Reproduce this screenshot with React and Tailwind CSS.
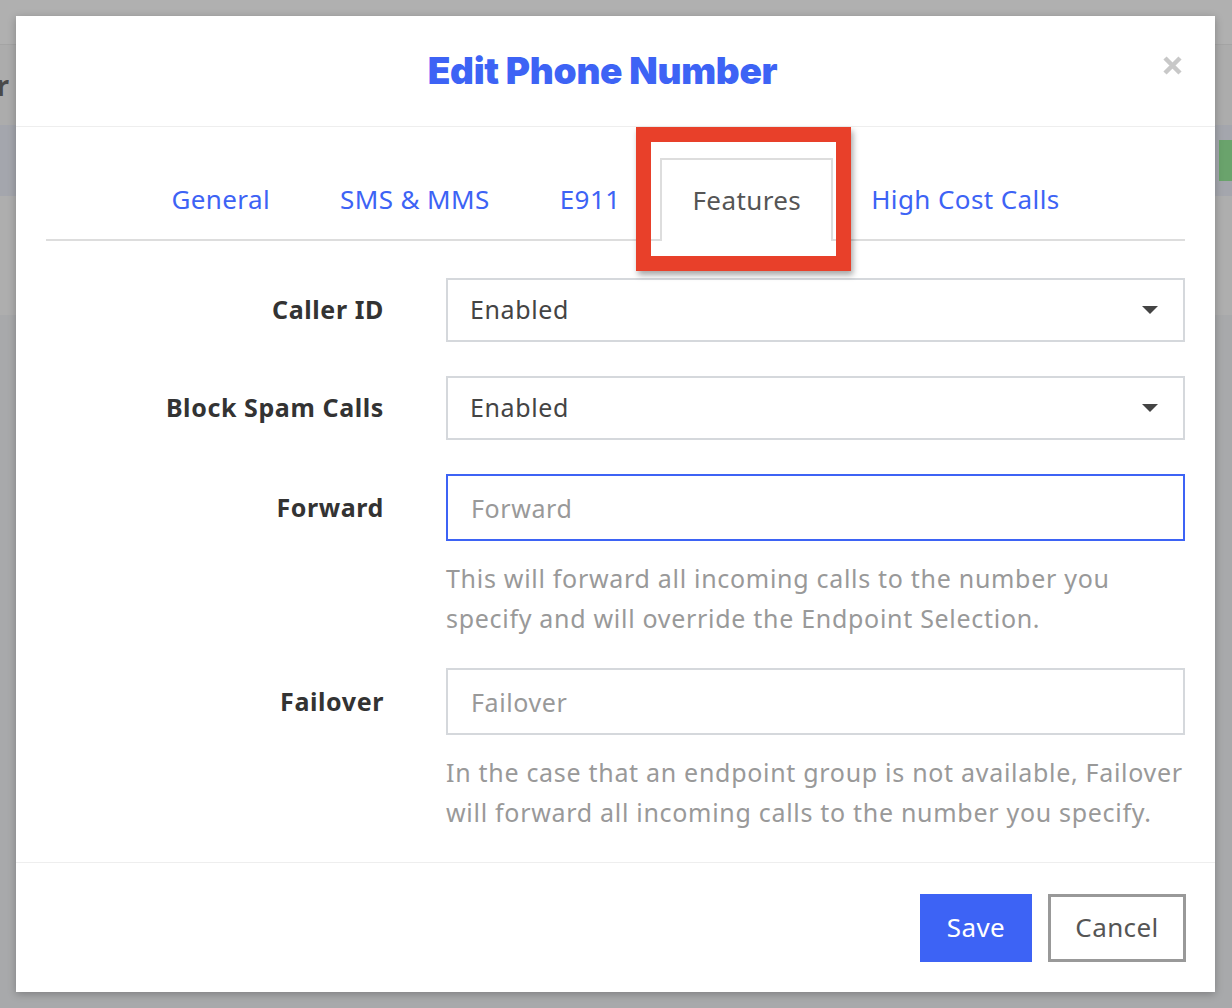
import { useState } from 'react';

const tabs = ['General', 'SMS & MMS', 'E911', 'Features', 'High Cost Calls'];

function Caret() {
  return (
    <svg width="16" height="8" viewBox="0 0 16 8" className="shrink-0">
      <path d="M0 0 H16 L8 8 Z" fill="#444" />
    </svg>
  );
}

function SelectField({ value }) {
  return (
    <div className="flex h-[64px] w-full items-center justify-between border-2 border-[#d5d8dc] bg-white pl-[22px] pr-[25px] text-[25px] tracking-[0.6px] text-[#444]">
      <span>{value}</span>
      <Caret />
    </div>
  );
}

function TextField({ placeholder, focused }) {
  return (
    <input
      placeholder={placeholder}
      className={
        focused
          ? 'h-[67px] w-full border-2 border-[#3d63f5] bg-white px-[23px] text-[25px] tracking-[0.6px] text-[#444] outline-none placeholder:text-[#999]'
          : 'h-[67px] w-full border-2 border-[#d5d8dc] bg-white px-[23px] text-[25px] tracking-[0.6px] text-[#444] outline-none placeholder:text-[#999]'
      }
    />
  );
}

function Row({ label, height, children, help }) {
  return (
    <div className="flex items-start gap-[62px]">
      <div
        className={
          height === 64
            ? 'flex h-[64px] w-[338px] shrink-0 items-center justify-end text-[25px] font-bold tracking-[0.6px] text-[#333]'
            : 'flex h-[67px] w-[338px] shrink-0 items-center justify-end text-[25px] font-bold tracking-[0.6px] text-[#333]'
        }
      >
        {label}
      </div>
      <div className="flex-1">
        {children}
        {help && (
          <p className="mt-[17px] whitespace-nowrap text-[25px] leading-[40px] tracking-[0.7px] text-[#999]">
            {help}
          </p>
        )}
      </div>
    </div>
  );
}

export default function App() {
  const [active, setActive] = useState('Features');

  return (
    <div
      className="relative h-[1008px] w-[1232px] overflow-hidden bg-[#a8a9ab]"
      style={{ fontFamily: '"Noto Sans", "Open Sans", sans-serif' }}
    >
      {/* dimmed page behind the modal */}
      <div className="h-[45px] border-b border-[#a4a4a4] bg-[#b0b0b0]" />
      <div className="flex h-[80px] items-center bg-[#acacac]">
        <div className="flex w-[9px] justify-end overflow-hidden whitespace-nowrap text-[28px] font-bold text-[#4a4a4a]">
          Phone Number
        </div>
      </div>
      <div className="flex h-[71px] items-center justify-end bg-[#a4a6ad]">
        <div className="h-[41px] w-[13px] bg-[#6aa36c]" />
      </div>
      <div className="h-[119px] bg-[#aeaeae]" />

      {/* modal */}
      <div className="absolute left-[16px] top-[16px] flex h-[976px] w-[1199px] flex-col bg-white shadow-[0_2px_8px_rgba(0,0,0,0.25)]">
        <div className="relative flex h-[111px] shrink-0 items-center justify-center border-b border-[#eeeeee] pr-[26px]">
          <h1
            className="text-[37px] font-black tracking-[-0.3px] text-[#3d63f5]"
            style={{ fontFamily: 'Inter, "Noto Sans", sans-serif' }}
          >
            Edit Phone Number
          </h1>
          <button className="absolute right-[33px] top-[40px]" aria-label="Close">
            <svg width="19" height="19" viewBox="0 0 19 19">
              <path d="M2 2 L17 17 M17 2 L2 17" stroke="#c8c8c8" strokeWidth="4.5" />
            </svg>
          </button>
        </div>

        <div className="flex-1 px-[30px]">
          <div className="mt-[31px] flex justify-center border-b-2 border-[#dddddd]">
            {tabs.map((t) => (
              <button
                key={t}
                onClick={() => setActive(t)}
                className={
                  t === active
                    ? '-mb-[2px] ml-[5px] mr-[3px] flex h-[83px] items-center border-2 border-b-0 border-[#dddddd] bg-white px-[30px] text-[26px] tracking-[0.4px] text-[#555]'
                    : '-mb-[2px] flex h-[83px] items-center border-2 border-transparent px-[33px] text-[26px] tracking-[0.4px] text-[#3d63f5]'
                }
              >
                {t}
              </button>
            ))}
          </div>

          <div className="mt-[37px] flex flex-col gap-[34px]">
            <Row label="Caller ID" height={64}>
              <SelectField value="Enabled" />
            </Row>
            <Row label="Block Spam Calls" height={64}>
              <SelectField value="Enabled" />
            </Row>
            <div className="flex flex-col gap-[30px]">
              <Row
                label="Forward"
                height={67}
                help={
                  <>
                    This will forward all incoming calls to the number you
                    <br />
                    specify and will override the Endpoint Selection.
                  </>
                }
              >
                <TextField placeholder="Forward" focused />
              </Row>
              <Row
                label="Failover"
                height={67}
                help={
                  <>
                    In the case that an endpoint group is not available, Failover
                    <br />
                    will forward all incoming calls to the number you specify.
                  </>
                }
              >
                <TextField placeholder="Failover" />
              </Row>
            </div>
          </div>
        </div>

        <div className="flex h-[130px] shrink-0 items-center justify-end gap-[16px] border-t border-[#eeeeee] pr-[29px]">
          <button className="h-[68px] w-[112px] bg-[#3d63f5] text-[26px] tracking-[0.4px] text-white">Save</button>
          <button className="h-[68px] w-[138px] border-[3px] border-[#999] bg-white text-[26px] tracking-[0.4px] text-[#555]">
            Cancel
          </button>
        </div>
      </div>

      {/* annotation highlight around the active tab */}
      <div className="pointer-events-none absolute left-[636px] top-[127px] h-[144px] w-[215px] border-[15px] border-[#e8402a] shadow-[2px_4px_6px_rgba(0,0,0,0.35)]" />
    </div>
  );
}
